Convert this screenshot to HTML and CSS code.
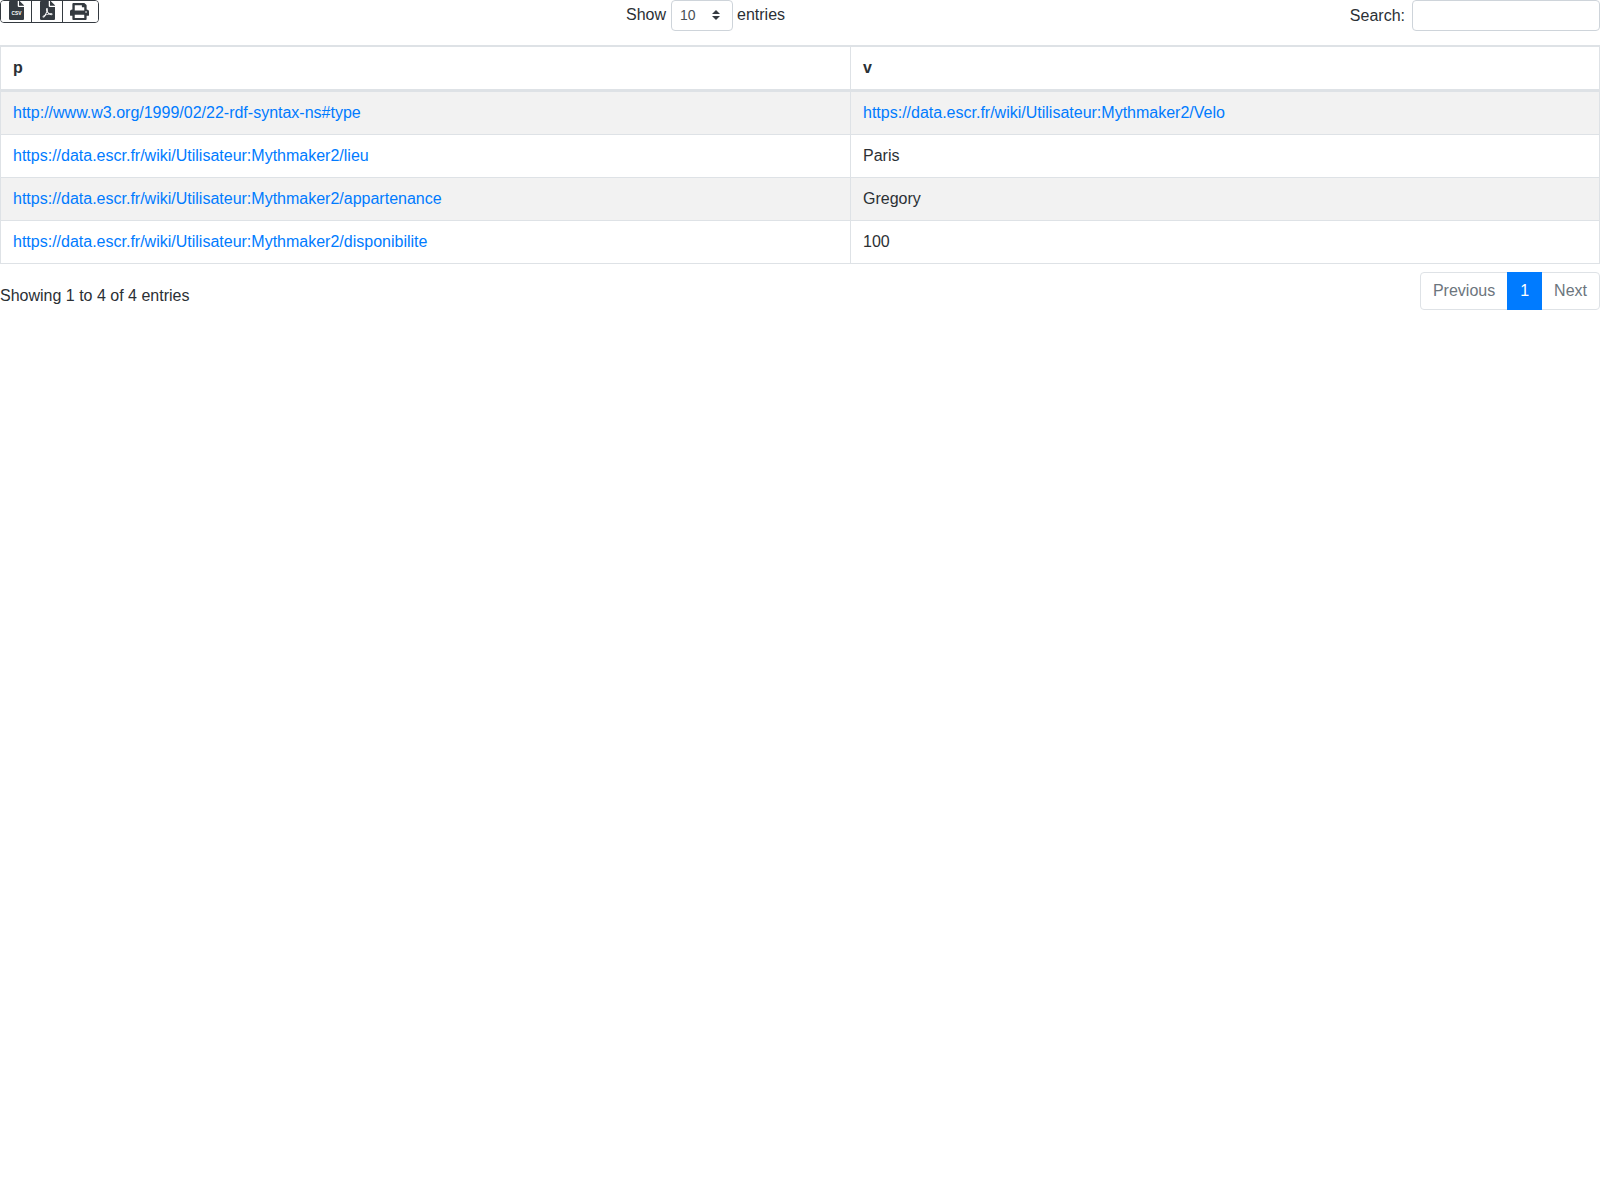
FILE: index.html
```html
<!DOCTYPE html>
<html lang="en">
<head>
<meta charset="utf-8">
<title>Data</title>
<link rel="stylesheet" href="styles.css">
</head>
<body>
<div class="toolbar">
  <div class="btn-group">
    <button class="btn" type="button" aria-label="CSV">
      <svg class="icon-file" viewBox="0 0 384 512" preserveAspectRatio="none"><path d="M224 136V0H24C10.7 0 0 10.7 0 24v464c0 13.3 10.7 24 24 24h336c13.3 0 24-10.7 24-24V160H248c-13.2 0-24-10.8-24-24zM377 105L279 7c-4.5-4.5-10.6-7-17-7h-6v128h128v-6.1c0-6.3-2.5-12.4-7-16.9z"/><text class="csv-label" x="192" y="370" text-anchor="middle">CSV</text></svg>
    </button>
    <button class="btn" type="button" aria-label="PDF">
      <svg class="icon-file" viewBox="0 0 384 512" preserveAspectRatio="none"><path d="M181.9 256.1c-5-16-4.9-46.9-2-46.9 8.4 0 7.6 36.9 2 46.9zm-2.5 47.2c-7.7 20.2-17.3 43.3-28.4 62.7 18.3-7 39-17.2 62.9-21.9-12.7-9.6-24.9-23.4-34.5-40.8zM86.1 428.1c0 .8 13.2-5.4 34.9-40.2-6.7 6.3-29.1 24.5-34.9 40.2zM248 160h136v328c0 13.3-10.7 24-24 24H24c-13.3 0-24-10.7-24-24V24C0 10.7 10.7 0 24 0h200v136c0 13.2 10.8 24 24 24zm-8 171.8c-20-12.2-33.3-29-42.7-53.8 4.5-18.5 11.6-46.6 6.2-64.2-4.7-29.4-42.4-26.5-47.8-6.8-5 18.3-.4 44.1 8.1 77-11.6 27.6-28.7 64.6-40.8 85.8-.1 0-.1.1-.2.1-27.1 13.9-73.6 44.5-54.5 68 5.6 6.9 16 10 21.5 10 17.9 0 35.7-18 61.1-61.8 25.8-8.5 54.1-19.1 79-23.2 21.7 11.8 47.1 19.5 64 19.5 29.2 0 31.2-32 19.7-43.4-13.9-13.6-54.3-9.7-73.6-7.2zM377 105L279 7c-4.5-4.5-10.6-7-17-7h-6v128h128v-6.1c0-6.3-2.5-12.4-7-16.9zm-74.1 255.3c4.1-2.7-2.5-11.9-42.8-9 37.1 15.8 42.8 9 42.8 9z"/></svg>
    </button>
    <button class="btn" type="button" aria-label="Print">
      <svg class="icon-print" viewBox="0 0 512 512" preserveAspectRatio="none"><path d="M448 192V77.25c0-8.49-3.37-16.62-9.37-22.63L393.37 9.37c-6-6-14.14-9.37-22.63-9.37H96C78.33 0 64 14.33 64 32v160c-35.35 0-64 28.65-64 64v112c0 8.84 7.16 16 16 16h48v96c0 17.67 14.33 32 32 32h320c17.67 0 32-14.33 32-32v-96h48c8.84 0 16-7.16 16-16V256c0-35.35-28.65-64-64-64zm-64 256H128v-96h256v96zm0-224H128V64h192v48c0 8.84 7.16 16 16 16h48v96zm48 72c-13.25 0-24-10.75-24-24 0-13.26 10.75-24 24-24s24 10.74 24 24c0 13.25-10.75 24-24 24z"/></svg>
    </button>
  </div>
  <label class="length"><span>Show</span>
    <select class="select"><option>10</option><option>25</option><option>50</option><option>100</option></select>
    <span class="length-after">entries</span></label>
  <label class="search">Search:
    <input class="search-input" type="search">
  </label>
</div>
<table class="table">
  <thead>
    <tr><th class="col-p">p</th><th>v</th></tr>
  </thead>
  <tbody>
    <tr class="odd"><td><a href="#">http://www.w3.org/1999/02/22-rdf-syntax-ns#type</a></td><td><a href="#">https://data.escr.fr/wiki/Utilisateur:Mythmaker2/Velo</a></td></tr>
    <tr><td><a href="#">https://data.escr.fr/wiki/Utilisateur:Mythmaker2/lieu</a></td><td>Paris</td></tr>
    <tr class="odd"><td><a href="#">https://data.escr.fr/wiki/Utilisateur:Mythmaker2/appartenance</a></td><td>Gregory</td></tr>
    <tr><td><a href="#">https://data.escr.fr/wiki/Utilisateur:Mythmaker2/disponibilite</a></td><td>100</td></tr>
  </tbody>
</table>
<div class="footer">
  <div class="info">Showing 1 to 4 of 4 entries</div>
  <ul class="pagination">
    <li class="page page-first">Previous</li>
    <li class="page page-active">1</li>
    <li class="page page-last">Next</li>
  </ul>
</div>
</body>
</html>
```
FILE: styles.css
```css
* { box-sizing: border-box; }
html, body { margin: 0; padding: 0; background: #fff; }
body {
  font-family: "Liberation Sans", Arial, sans-serif;
  font-size: 16px;
  line-height: 24px;
  color: #2b3035;
}
.toolbar {
  display: grid;
  grid-template-columns: 626px 1fr auto;
  align-items: start;
  height: 45px;
}
.btn-group {
  display: flex;
  width: 99px;
  height: 23px;
  border: 1px solid #343a40;
  border-radius: 4px;
  overflow: hidden;
}
.btn {
  display: flex;
  justify-content: flex-start;
  align-items: flex-start;
  padding: 0 0 0 8px;
  margin: 0;
  background: #fff;
  border: 0;
  border-right: 1px solid #343a40;
  width: 31px;
  height: 21px;
}
.btn:last-child { border-right: 0; flex: 1; padding: 2px 0 0 7px; }
.icon-file { width: 15px; height: 19px; fill: #343a40; display: block; }
.icon-print { width: 19px; height: 17px; fill: #343a40; display: block; }
.csv-label { font: bold 125px "Liberation Sans", sans-serif; fill: #fff; }
.length { display: flex; align-items: center; gap: 5px; height: 31px; margin-top: -1px; }
.length-after { margin-left: -1px; }
.select {
  appearance: none;
  -webkit-appearance: none;
  width: 62px;
  height: 31px;
  margin-top: 1px;
  padding: 0 20px 0 8px;
  font: 14px/21px "Liberation Sans", Arial, sans-serif;
  color: #495057;
  background: #fff url("data:image/svg+xml,%3csvg xmlns='http://www.w3.org/2000/svg' width='4' height='5' viewBox='0 0 4 5'%3e%3cpath fill='%23343a40' d='M2 0L0 2h4zm0 5L0 3h4z'/%3e%3c/svg%3e") no-repeat right 12px center / 8px 10px;
  border: 1px solid #ced4da;
  border-radius: 4px;
}
.search { display: flex; align-items: center; gap: 7px; height: 31px; }
.search-input {
  width: 188px;
  height: 31px;
  padding: 4px 8px;
  font: 14px/21px "Liberation Sans", Arial, sans-serif;
  color: #495057;
  background: #fff;
  border: 1px solid #ced4da;
  border-radius: 4px;
}
.table {
  width: 1600px;
  table-layout: fixed;
  border-collapse: separate;
  border-spacing: 0;
  border-top: 1px solid #dee2e6;
  border-left: 1px solid #dee2e6;
}
.table th, .table td {
  padding: 9px 12px;
  text-align: left;
  vertical-align: top;
  border-right: 1px solid #dee2e6;
  border-bottom: 1px solid #dee2e6;
}
.table th {
  font-weight: 700;
  border-top: 1px solid #dee2e6;
  border-bottom-width: 2px;
}
.table tbody tr:first-child td { border-top: 1px solid #dee2e6; }
.col-p { width: 850px; }
.odd { background: #f2f2f2; }
a { color: #007bff; text-decoration: none; }
.footer {
  display: flex;
  justify-content: space-between;
  align-items: flex-start;
  margin-top: 8px;
}
.info { padding-top: 12px; }
.pagination { display: flex; margin: 0; padding: 0; list-style: none; }
.page {
  padding: 6px 12px;
  height: 38px;
  color: #6c757d;
  background: #fff;
  border: 1px solid #dee2e6;
  margin-left: -1px;
}
.page-first { border-radius: 4px 0 0 4px; }
.page-last { border-radius: 0 4px 4px 0; }
.page-active { background: #007bff; border-color: #007bff; color: #fff; position: relative; }
```
